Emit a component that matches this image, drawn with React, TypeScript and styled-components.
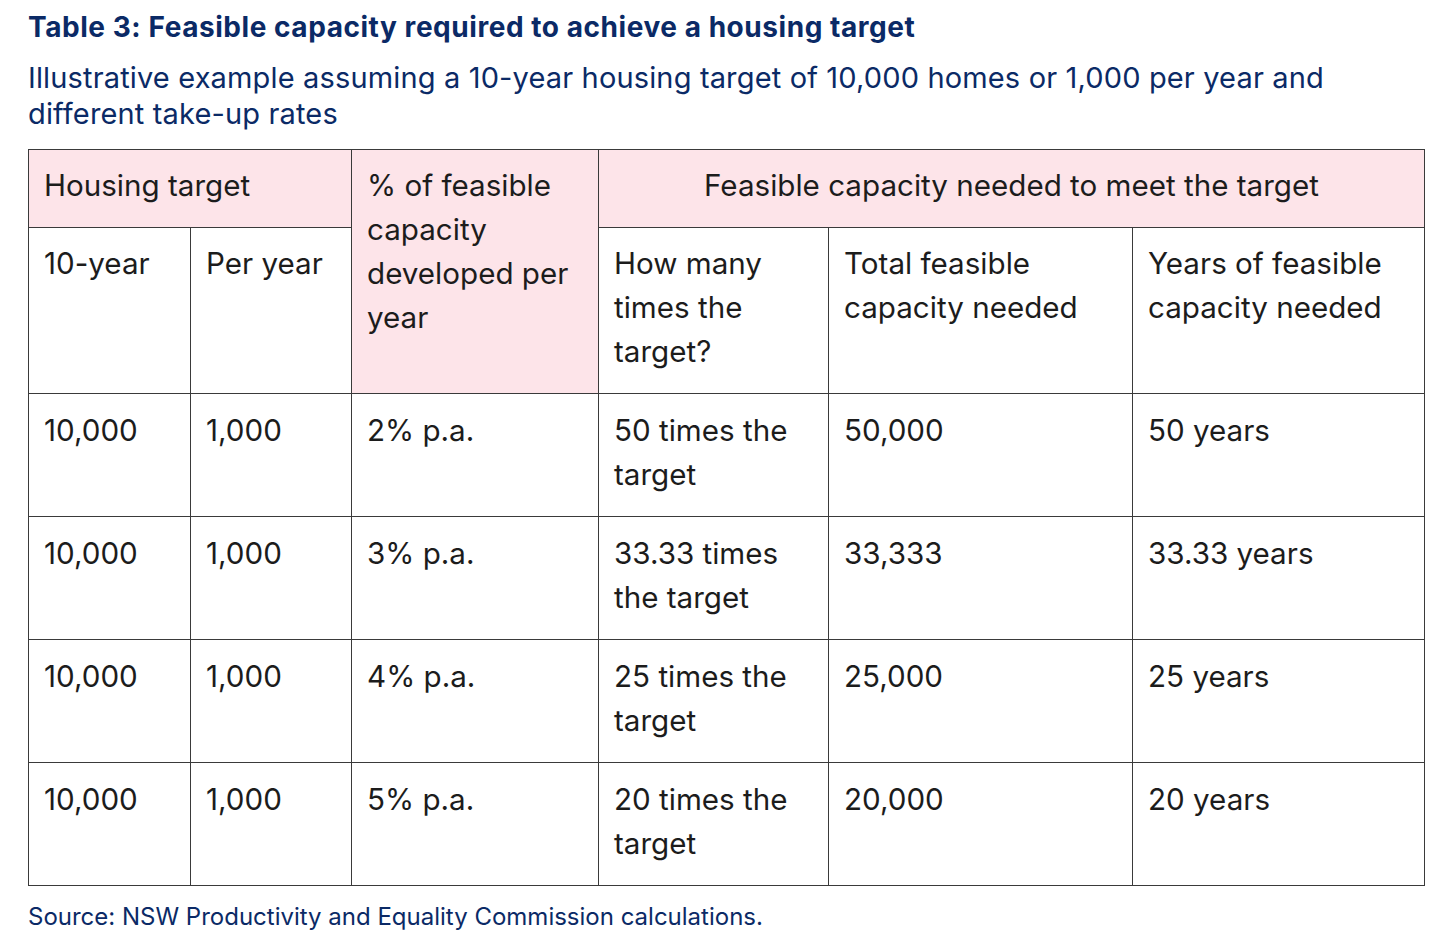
import * as React from 'react'
import styled, { createGlobalStyle } from 'styled-components'

/**
 * Data
 */

type Row = {
    tenYear: string
    perYear: string
    share: string
    times: string
    total: string
    years: string
}

const rows: Row[] = [
    { tenYear: '10,000', perYear: '1,000', share: '2% p.a.', times: '50 times the target', total: '50,000', years: '50 years' },
    { tenYear: '10,000', perYear: '1,000', share: '3% p.a.', times: '33.33 times the target', total: '33,333', years: '33.33 years' },
    { tenYear: '10,000', perYear: '1,000', share: '4% p.a.', times: '25 times the target', total: '25,000', years: '25 years' },
    { tenYear: '10,000', perYear: '1,000', share: '5% p.a.', times: '20 times the target', total: '20,000', years: '20 years' },
]

const columnWidths = [162, 161, 247, 230, 304, 292]

/**
 * Component
 */

export default function App() {
    return (
        <>
            <GlobalStyle />
            <Page>
                <Title>Table 3: Feasible capacity required to achieve a housing target</Title>
                <Subtitle>
                    Illustrative example assuming a 10-year housing target of 10,000 homes or 1,000 per year and
                    different take-up rates
                </Subtitle>
                <Table>
                    <colgroup>
                        {columnWidths.map((w, i) => (
                            <col key={i} style={{ width: w }} />
                        ))}
                    </colgroup>
                    <thead>
                        <TopHeadRow>
                            <HeadCell colSpan={2} shaded>
                                Housing target
                            </HeadCell>
                            <HeadCell rowSpan={2} shaded>
                                % of feasible capacity developed per year
                            </HeadCell>
                            <HeadCell colSpan={3} shaded centered>
                                Feasible capacity needed to meet the target
                            </HeadCell>
                        </TopHeadRow>
                        <SubHeadRow>
                            <HeadCell>10-year</HeadCell>
                            <HeadCell>Per year</HeadCell>
                            <HeadCell>How many times the target?</HeadCell>
                            <HeadCell>Total feasible capacity needed</HeadCell>
                            <HeadCell>Years of feasible capacity needed</HeadCell>
                        </SubHeadRow>
                    </thead>
                    <tbody>
                        {rows.map((row, i) => (
                            <BodyRow key={i}>
                                <Cell>{row.tenYear}</Cell>
                                <Cell>{row.perYear}</Cell>
                                <Cell>{row.share}</Cell>
                                <Cell>{row.times}</Cell>
                                <Cell>{row.total}</Cell>
                                <Cell>{row.years}</Cell>
                            </BodyRow>
                        ))}
                    </tbody>
                </Table>
                <Source>Source: NSW Productivity and Equality Commission calculations.</Source>
            </Page>
        </>
    )
}

/**
 * Styles
 */

const navy = '#0b2a66'
const ink = '#1c1c1c'
const rule = '#3a3a3a'
const pink = '#fde4e9'

const GlobalStyle = createGlobalStyle`
    html, body {
        margin: 0;
        padding: 0;
        background: #ffffff;
    }
    body {
        font-family: Inter, Roboto, "Liberation Sans", sans-serif;
        -webkit-font-smoothing: antialiased;
    }
`

const Page = styled.div`
    width: 1456px;
    padding: 10px 0 0 28px;
    box-sizing: border-box;
`

const Title = styled.h1`
    margin: 0;
    font-size: 28px;
    line-height: 34px;
    font-weight: 700;
    letter-spacing: 0.55px;
    color: ${navy};
`

const Subtitle = styled.p`
    margin: 16px 0 0;
    width: 1360px;
    font-size: 29px;
    line-height: 36px;
    font-weight: 400;
    letter-spacing: 0.15px;
    color: ${navy};
`

const Table = styled.table`
    margin-top: 17px;
    width: 1397px;
    table-layout: fixed;
    border-collapse: collapse;
    border: 1.5px solid ${rule};
    color: ${ink};
    font-size: 29.6px;
    line-height: 44px;
`

const TopHeadRow = styled.tr`
    height: 78px;
`

const SubHeadRow = styled.tr`
    height: 166px;
`

const BodyRow = styled.tr`
    height: 123px;
`

const HeadCell = styled.th.withConfig({
    shouldForwardProp: prop => prop !== 'shaded' && prop !== 'centered',
})<{ shaded?: boolean; centered?: boolean }>`
    border: 1.5px solid ${rule};
    padding: 13px 15px 14px 15px;
    vertical-align: top;
    text-align: ${props => (props.centered ? 'center' : 'left')};
    font-weight: 400;
    background: ${props => (props.shaded ? pink : '#ffffff')};
`

const Cell = styled.td`
    border: 1.5px solid ${rule};
    padding: 14px 15px 14px 15px;
    vertical-align: top;
    text-align: left;
`

const Source = styled.p`
    margin: 16px 0 0;
    font-size: 24px;
    line-height: 30px;
    color: ${navy};
`
